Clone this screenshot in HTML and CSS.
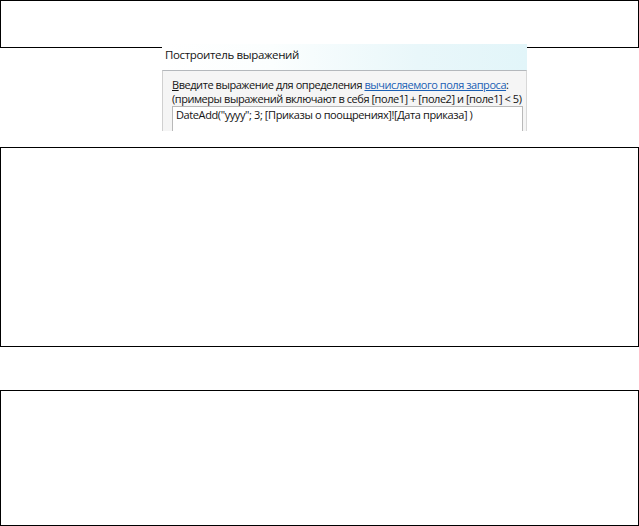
FILE: index.html
```html
<!DOCTYPE html>
<html lang="ru">
<head>
<meta charset="utf-8">
<link rel="stylesheet" href="styles.css">
</head>
<body>
<div class="page">
  <div class="frame frame-top"></div>
  <div class="shot">
    <div class="shot-title">Построитель выражений</div>
    <div class="shot-panel">
      <div class="shot-line"><u>В</u>ведите выражение для определения <a class="link">вычисляемого поля запроса</a>:</div>
      <div class="shot-line">(примеры выражений включают в себя [поле1] + [поле2] и [поле1] &lt; 5)</div>
      <div class="shot-box">DateAdd("yyyy"; 3; [Приказы о поощрениях]![Дата приказа] )</div>
    </div>
  </div>
  <div class="frame frame-mid"></div>
  <div class="frame frame-bot"></div>
</div>
</body>
</html>
```

FILE: styles.css
```css
html, body {
  margin: 0;
  padding: 0;
  background: #fff;
}
.page {
  width: 639px;
  height: 526px;
  overflow: hidden;
  display: flex;
  flex-direction: column;
}
.frame {
  box-sizing: border-box;
  width: 639px;
  border: 1.5px solid #000;
  background: #fff;
}
.frame-top {
  height: 48px;
}
.frame-mid {
  height: 201px;
  margin-top: 16px;
}
.frame-bot {
  height: 136px;
  margin-top: 43px;
}
.shot {
  position: relative;
  z-index: 1;
  margin-top: -4px;
  margin-left: 162px;
  width: 365px;
  height: 87px;
  overflow: hidden;
  font-family: "Open Sans", "Noto Sans", sans-serif;
  font-size: 11px;
  color: #141414;
  display: flex;
  flex-direction: column;
}
.shot-title {
  height: 26px;
  flex: none;
  padding: 3px 0 0 3px;
  box-sizing: border-box;
  font-size: 11.5px;
  line-height: 15px;
  background: linear-gradient(to right, #ffffff 0%, #fbfefe 30%, #e9f7fa 70%, #e2f5f9 100%);
  letter-spacing: -0.35px;
}
.shot-panel {
  flex: 1;
  background: #f5f5f5;
  border-top: 1px solid #b4b8bc;
  border-left: 1px solid #d0d0d0;
  border-right: 1px solid #d8d8d8;
  padding: 7px 0 0 9px;
  display: flex;
  flex-direction: column;
}
.shot-line {
  height: 14px;
  line-height: 14px;
  white-space: nowrap;
  letter-spacing: -0.45px;
}
.link {
  color: #1a5fb4;
  text-decoration: underline;
}
.shot-box {
  margin-right: 3px;
  flex: 1;
  background: #fff;
  border: 1px solid #b9b9b9;
  border-bottom: none;
  padding: 0 0 0 3px;
  line-height: 16px;
  white-space: nowrap;
  letter-spacing: -0.4px;
}
```
